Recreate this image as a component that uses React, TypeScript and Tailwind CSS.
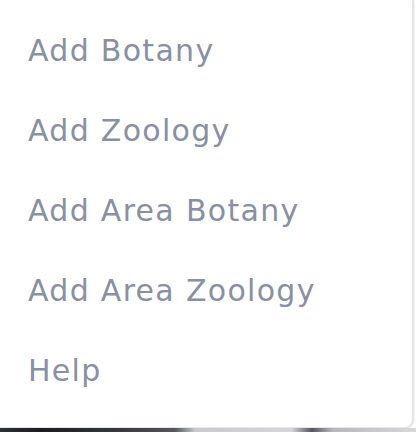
const items = ["Add Botany", "Add Zoology", "Add Area Botany", "Add Area Zoology", "Help"];

export default function App() {
  return (
    <div className="flex flex-col w-[416px] h-[432px] bg-white overflow-hidden">
      <div className="flex flex-col w-[414px] h-[428px] pt-[10px] bg-white border-r-2 border-b border-[#e4e6ea] rounded-br-[9px] shadow-sm">
        {items.map((label) => (
          <div
            key={label}
            className="flex items-center h-[80px] pl-[28px] text-[30px] tracking-[1.3px] text-[#8890a3] font-['DejaVu_Sans',sans-serif]"
          >
            {label}
          </div>
        ))}
      </div>
      <div className="h-[4px] w-full bg-[linear-gradient(90deg,#2e2f33_0%,#1c1c1f_10%,#3a3b3f_30%,#55565a_42%,#c9c9cb_47%,#d6d6d8_70%,#55565f_75%,#b8b8bb_80%,#d8d8da_100%)]" />
    </div>
  );
}
